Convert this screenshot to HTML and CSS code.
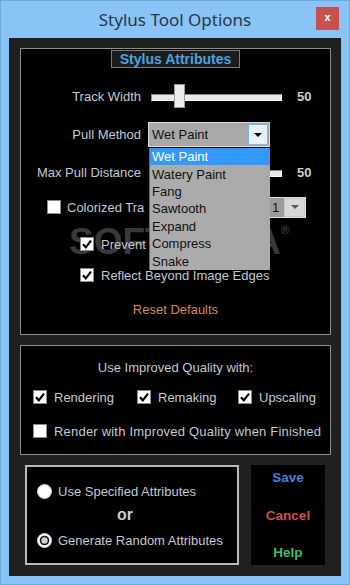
FILE: index.html
```html
<!DOCTYPE html>
<html lang="en">
<head>
    <meta charset="UTF-8">
    <title>Stylus Tool Options</title>
    <link rel="stylesheet" href="styles.css">
</head>
<body>
    <div class="window">
        <div class="titlebar">
            <div class="title">Stylus Tool Options</div>
            <div class="close">x</div>
        </div>
        <div class="client">
            <div class="panel attrs">
                <div class="watermark">SOFTPEDIA<span class="reg">&reg;</span></div>
                <div class="legend">Stylus Attributes</div>

                <div class="row track-row">
                    <span class="label">Track Width</span>
                    <div class="slider"><div class="thumb"></div></div>
                    <span class="value">50</span>
                </div>

                <div class="row pull-row">
                    <span class="label">Pull Method</span>
                    <div class="combo">
                        <span>Wet Paint</span>
                        <div class="combo-btn"><i class="arrow"></i></div>
                    </div>
                </div>

                <div class="row track-row max-row">
                    <span class="label">Max Pull Distance</span>
                    <div class="slider"><div class="thumb"></div></div>
                    <span class="value">50</span>
                </div>

                <div class="row color-row">
                    <svg class="cb" width="14" height="14" viewBox="0 0 14 14"><rect x="0.5" y="0.5" width="13" height="13" fill="#fff" stroke="#8a8a8a"/></svg>
                    <span class="text">Colorized Tra</span>
                    <div class="combo small">
                        <span>1</span>
                        <div class="combo-btn grey"><i class="arrow"></i></div>
                    </div>
                </div>

                <div class="row check-row prevent">
                    <svg class="cb" width="14" height="14" viewBox="0 0 14 14"><rect x="0.5" y="0.5" width="13" height="13" fill="#fff" stroke="#8a8a8a"/><path d="M3 7.2 L5.8 10.3 L11 3.6" fill="none" stroke="#000" stroke-width="2.2"/></svg>
                    <span class="text">Prevent</span>
                </div>

                <div class="row check-row reflect">
                    <svg class="cb" width="14" height="14" viewBox="0 0 14 14"><rect x="0.5" y="0.5" width="13" height="13" fill="#fff" stroke="#8a8a8a"/><path d="M3 7.2 L5.8 10.3 L11 3.6" fill="none" stroke="#000" stroke-width="2.2"/></svg>
                    <span class="text">Reflect Beyond Image Edges</span>
                </div>

                <div class="reset">Reset Defaults</div>

                <ul class="dropdown">
                    <li class="selected">Wet Paint</li>
                    <li>Watery Paint</li>
                    <li>Fang</li>
                    <li>Sawtooth</li>
                    <li>Expand</li>
                    <li>Compress</li>
                    <li>Snake</li>
                </ul>
            </div>

            <div class="panel quality">
                <div class="q-title">Use Improved Quality with:</div>
                <div class="row q-row">
                    <div class="q-item w1">
                        <svg class="cb" width="14" height="14" viewBox="0 0 14 14"><rect x="0.5" y="0.5" width="13" height="13" fill="#fff" stroke="#8a8a8a"/><path d="M3 7.2 L5.8 10.3 L11 3.6" fill="none" stroke="#000" stroke-width="2.2"/></svg>
                        <span class="text">Rendering</span>
                    </div>
                    <div class="q-item w2">
                        <svg class="cb" width="14" height="14" viewBox="0 0 14 14"><rect x="0.5" y="0.5" width="13" height="13" fill="#fff" stroke="#8a8a8a"/><path d="M3 7.2 L5.8 10.3 L11 3.6" fill="none" stroke="#000" stroke-width="2.2"/></svg>
                        <span class="text">Remaking</span>
                    </div>
                    <div class="q-item">
                        <svg class="cb" width="14" height="14" viewBox="0 0 14 14"><rect x="0.5" y="0.5" width="13" height="13" fill="#fff" stroke="#8a8a8a"/><path d="M3 7.2 L5.8 10.3 L11 3.6" fill="none" stroke="#000" stroke-width="2.2"/></svg>
                        <span class="text">Upscaling</span>
                    </div>
                </div>
                <div class="row q-row second">
                    <svg class="cb" width="14" height="14" viewBox="0 0 14 14"><rect x="0.5" y="0.5" width="13" height="13" fill="#fff" stroke="#8a8a8a"/></svg>
                    <span class="text wide">Render with Improved Quality when Finished</span>
                </div>
            </div>

            <div class="bottom">
                <div class="choice">
                    <div class="row radio-row first">
                        <svg class="radio" width="15" height="15" viewBox="0 0 15 15"><circle cx="7.5" cy="7.5" r="7" fill="#fff" stroke="#d0d0d0"/></svg>
                        <span class="text">Use Specified Attributes</span>
                    </div>
                    <div class="or">or</div>
                    <div class="row radio-row last">
                        <svg class="radio" width="15" height="15" viewBox="0 0 15 15"><circle cx="7.5" cy="7.5" r="7" fill="#fff" stroke="#d0d0d0"/><circle cx="7.5" cy="7.5" r="4" fill="#cfcfcf" stroke="#111" stroke-width="1.6"/></svg>
                        <span class="text">Generate Random Attributes</span>
                    </div>
                </div>
                <div class="actions">
                    <div class="action save">Save</div>
                    <div class="action cancel">Cancel</div>
                    <div class="action help">Help</div>
                </div>
            </div>
        </div>
    </div>
</body>
</html>
```

FILE: styles.css
```css
* {
    box-sizing: border-box;
}
body {
    margin: 0;
    font-family: "Liberation Sans", Arial, sans-serif;
    font-size: 13px;
    background-color: #8ac4f6;
}
.window {
    width: 350px;
    height: 585px;
    border: 1px solid #6ea8dc;
    background-color: #8ac4f6;
}
.titlebar {
    height: 37px;
    display: grid;
    grid-template-columns: 1fr auto 1fr;
}
.title {
    grid-column: 2;
    align-self: center;
    font-family: "Noto Sans", sans-serif;
    font-size: 17px;
    color: #26384c;
}
.close {
    grid-column: 3;
    justify-self: end;
    align-self: start;
    margin-top: 6px;
    margin-right: 10px;
    width: 23px;
    height: 23px;
    background-color: #c75050;
    color: #fff;
    font-weight: bold;
    font-size: 11px;
    line-height: 21px;
    text-align: center;
}
.client {
    margin-left: 8px;
    width: 332px;
    height: 538px;
    background-color: #202020;
    padding: 10px 0 0 11px;
}
.panel {
    width: 311px;
    border: 1px solid #8c8c8c;
    background-color: #000;
    position: relative;
    color: #c2c9d1;
}
.attrs {
    height: 287px;
}
.legend {
    width: 129px;
    height: 18px;
    margin: 1px auto 0;
    border: 1px solid #7a7a7a;
    background-color: #1c1c1c;
    color: #4aa2de;
    font-weight: bold;
    font-size: 14px;
    text-align: center;
    line-height: 16px;
    position: relative;
}
.row {
    display: flex;
    align-items: center;
    position: relative;
}
.label {
    width: 120px;
    text-align: right;
}
.track-row {
    margin-top: 16px;
    height: 24px;
}
.max-row {
    margin-top: 13px;
}
.slider {
    margin-left: 10px;
    width: 131px;
    height: 24px;
    position: relative;
    display: flex;
    align-items: center;
}
.slider::before {
    content: "";
    position: absolute;
    left: 0;
    right: 0;
    top: 10px;
    height: 5px;
    background-color: #e8e8e8;
    border: 1px solid;
    border-color: #8a8a8a #fff #fff #8a8a8a;
}
.thumb {
    position: relative;
    margin-left: 23px;
    width: 11px;
    height: 24px;
    background-color: #ececec;
    border: 1px solid #9a9a9a;
}
.value {
    margin-left: 15px;
    font-weight: bold;
    color: #c8d0d8;
}
.pull-row {
    margin-top: 14px;
    height: 25px;
}
.combo {
    margin-left: 7px;
    width: 122px;
    height: 25px;
    background-color: #a8a8a8;
    border: 1px solid #d8d8d8;
    display: flex;
    align-items: center;
    padding-left: 3px;
    color: #111;
}
.combo-btn {
    margin-left: auto;
    margin-right: 1px;
    width: 20px;
    height: 21px;
    background-color: #e5f1fb;
    border: 1px solid #7eb4ea;
    display: flex;
    align-items: center;
    justify-content: center;
}
.arrow {
    width: 0;
    height: 0;
    border-left: 4px solid transparent;
    border-right: 4px solid transparent;
    border-top: 4px solid #000;
}
.color-row {
    margin-top: 12px;
    height: 22px;
    padding-left: 26px;
}
.text {
    margin-left: 6px;
    white-space: nowrap;
}
.combo.small {
    margin-left: auto;
    margin-right: 24px;
    width: 50px;
    height: 21px;
    background-color: #9c9c9c;
    border-color: #e0e0e0;
    padding-left: 15px;
}
.combo-btn.grey {
    width: 21px;
    height: 19px;
    margin-right: 0;
    background-color: #d8d8d8;
    border-color: #c8c8c8;
}
.combo-btn.grey .arrow {
    border-top-color: #5a5a5a;
}
.check-row {
    height: 16px;
    padding-left: 59px;
}
.check-row .text {
    margin-left: 7px;
}
.prevent {
    margin-top: 18px;
}
.reflect {
    margin-top: 15px;
}
.reset {
    margin-top: 19px;
    height: 16px;
    line-height: 16px;
    text-align: center;
    color: #d2895a;
    position: relative;
}
.cb, .radio {
    flex: none;
}
.watermark {
    position: absolute;
    left: 48px;
    top: 175px;
    font-size: 37px;
    font-weight: bold;
    line-height: 36px;
    color: #393939;
}
.watermark .reg {
    font-size: 12px;
    vertical-align: top;
    line-height: 12px;
}
.dropdown {
    position: absolute;
    left: 128px;
    top: 99px;
    width: 121px;
    height: 122px;
    margin: 0;
    padding: 0;
    list-style: none;
    background-color: #ababab;
    border-left: 1px solid #6a6a6a;
    display: flex;
    flex-direction: column;
    color: #111;
}
.dropdown li {
    flex: 1;
    display: flex;
    align-items: center;
    padding-left: 2px;
}
.dropdown li.selected {
    background-color: #3399ff;
    color: #fff;
}
.quality {
    height: 110px;
    margin-top: 10px;
}
.q-title {
    margin-top: 14px;
    height: 16px;
    line-height: 16px;
    text-align: center;
}
.q-row {
    margin-top: 13px;
    height: 16px;
    padding-left: 12px;
}
.q-row.second {
    margin-top: 18px;
}
.q-item {
    display: flex;
    align-items: center;
}
.q-item .text, .q-row .text {
    margin-left: 7px;
}
.text.wide {
    letter-spacing: 0.2px;
}
.w1 {
    width: 104px;
}
.w2 {
    width: 101px;
}
.bottom {
    display: flex;
    gap: 12px;
    margin-top: 10px;
    padding-left: 5px;
    height: 100px;
}
.choice {
    width: 214px;
    border: 2px solid #b8b8b8;
    background-color: #000;
    color: #c2c9d1;
}
.radio-row {
    height: 16px;
    padding-left: 10px;
}
.radio-row.first {
    margin-top: 16px;
}
.radio-row.last {
    margin-top: 9px;
}
.or {
    margin-top: 8px;
    height: 16px;
    line-height: 16px;
    padding-left: 90px;
    font-size: 16px;
    font-weight: bold;
    color: #c6d0dc;
}
.actions {
    width: 74px;
    background-color: #000;
    padding-top: 5px;
}
.action {
    height: 16px;
    line-height: 16px;
    text-align: center;
    font-weight: bold;
    font-size: 13.5px;
}
.save {
    color: #4d7fd9;
}
.cancel {
    margin-top: 22px;
    color: #d44c4c;
}
.help {
    margin-top: 21px;
    color: #3dbf6a;
}
```
